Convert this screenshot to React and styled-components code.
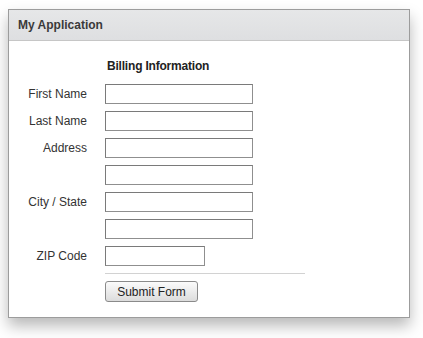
import React from "react";
import styled, { createGlobalStyle } from "styled-components";

const GlobalStyle = createGlobalStyle`
  body {
    margin: 0;
    background: #fff;
    font-family: "Liberation Sans", Arial, sans-serif;
  }
`;

const Page = styled.div`
  padding: 9px 14px 20px 8px;
`;

const Panel = styled.div`
  width: 400px;
  border: 1px solid #9c9c9c;
  background: #fff;
  box-shadow: 0 8px 14px rgba(0, 0, 0, 0.28);
`;

const Header = styled.div`
  height: 30px;
  display: flex;
  align-items: center;
  padding-left: 9px;
  background: linear-gradient(#e6e7e8, #dedfe1);
  border-bottom: 1px solid #c6c6c6;
  font-size: 12px;
  font-weight: bold;
  color: #3a3a3a;
`;

const Body = styled.div`
  padding: 18px 0 15px 0;
`;

const Form = styled.form`
  display: grid;
  grid-template-columns: 78px 1fr;
  column-gap: 18px;
  row-gap: 7px;
  align-items: center;
`;

const Title = styled.div`
  grid-column: 2;
  font-size: 12px;
  font-weight: bold;
  letter-spacing: -0.2px;
  color: #222;
  padding-left: 2px;
  margin-bottom: 4px;
  line-height: 14px;
`;

const Label = styled.label`
  grid-column: 1;
  text-align: right;
  font-size: 12px;
  color: #333;
`;

const Input = styled.input`
  grid-column: 2;
  box-sizing: border-box;
  width: ${(p) => (p.short ? "100px" : "148px")};
  height: 20px;
  margin: 0;
  padding: 1px 3px;
  border: 1px solid #8f8f8f;
  border-top-color: #7a7a7a;
  border-left-color: #7a7a7a;
  border-radius: 0;
  background: #fff;
  font: 12px "Liberation Sans", Arial, sans-serif;
`;

const Divider = styled.div`
  grid-column: 2;
  width: 200px;
  height: 1px;
  background: #d2d2d2;
`;

const Button = styled.button`
  grid-column: 2;
  justify-self: start;
  box-sizing: border-box;
  width: 93px;
  height: 21px;
  margin: 0;
  padding: 0;
  border: 1px solid #8a8a8a;
  border-radius: 3px;
  background: linear-gradient(#fbfbfb, #dcdcdc);
  font: 12px "Liberation Sans", Arial, sans-serif;
  color: #222;
`;

const fields = [
  { label: "First Name" },
  { label: "Last Name" },
  { label: "Address" },
  { label: "" },
  { label: "City / State" },
  { label: "" },
  { label: "ZIP Code", short: true },
];

const App = () => (
  <Page>
    <GlobalStyle />
    <Panel>
      <Header>My Application</Header>
      <Body>
        <Form onSubmit={(e) => e.preventDefault()}>
          <Title>Billing Information</Title>
          {fields.map((f, i) => (
            <React.Fragment key={i}>
              <Label>{f.label}</Label>
              <Input short={f.short} />
            </React.Fragment>
          ))}
          <Divider />
          <Button type="submit">Submit Form</Button>
        </Form>
      </Body>
    </Panel>
  </Page>
);

export default App;
